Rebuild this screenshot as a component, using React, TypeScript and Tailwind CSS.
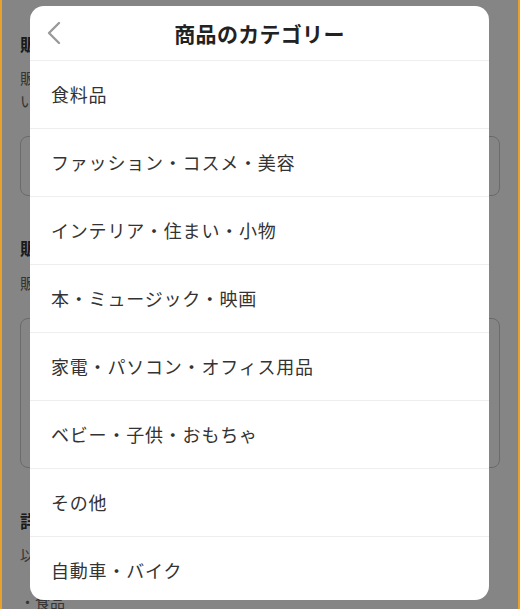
import React from 'react';

const categories = [
  '食料品',
  'ファッション・コスメ・美容',
  'インテリア・住まい・小物',
  '本・ミュージック・映画',
  '家電・パソコン・オフィス用品',
  'ベビー・子供・おもちゃ',
  'その他',
  '自動車・バイク',
];

const font = { fontFamily: '"Noto Sans CJK JP", "Noto Sans", sans-serif' };

const BackIcon: React.FC = () => (
  <svg width="16" height="24" viewBox="0 0 16 24" fill="none">
    <path d="M13 2 L3 12 L13 22" stroke="#9a9a9a" strokeWidth="2.4" strokeLinecap="round" strokeLinejoin="round" />
  </svg>
);

const App: React.FC = () => {
  return (
    <div className="relative w-[520px] h-[609px] overflow-hidden bg-white border-x-2 border-[#e9a12c]" style={font}>
      {/* Form page behind the sheet */}
      <div className="px-[18px] pt-[32px] text-[#333]">
        <h2 className="text-[17px] font-bold leading-[24px]">販売者の情報</h2>
        <p className="mt-[10px] text-[15px] leading-[23px] text-[#666]">
          販売者の名前と連絡先を入力してください。お客様に表示されま<br />
          いします。
        </p>
        <div className="mt-[24px] h-[60px] rounded-[8px] border border-[#ccc]" />
        <h2 className="mt-[40px] text-[17px] font-bold leading-[24px]">販売する商品</h2>
        <p className="mt-[11px] text-[15px] leading-[23px] text-[#666]">販売する商品について入力してください。</p>
        <div className="mt-[24px] h-[150px] rounded-[8px] border border-[#ccc]" />
        <h2 className="mt-[41px] text-[17px] font-bold leading-[24px]">詳細</h2>
        <p className="mt-[10px] text-[15px] leading-[23px] text-[#666]">以下から選んでください。</p>
        <p className="mt-[24px] text-[15px] leading-[23px] text-[#666]">・食品</p>
      </div>

      {/* Dim overlay */}
      <div className="absolute inset-0 bg-black/[0.48]" />

      {/* Category sheet */}
      <div className="absolute left-[28px] top-[6px] w-[459px] h-[594px] overflow-hidden rounded-[14px] bg-white">
        <div className="relative flex h-[55px] items-center justify-center border-b border-[#eeeeee]">
          <button className="absolute left-[16px] top-[15px] p-0">
            <BackIcon />
          </button>
          <h1 className="text-[21px] font-bold leading-none text-[#222] tracking-[0.3px]">商品のカテゴリー</h1>
        </div>
        <ul>
          {categories.map((c) => (
            <li key={c} className="flex h-[68px] items-center border-b border-[#eeeeee] pl-[21px] text-[18px] tracking-[0.8px] text-[#333]">
              {c}
            </li>
          ))}
        </ul>
      </div>
    </div>
  );
};

export default App;
